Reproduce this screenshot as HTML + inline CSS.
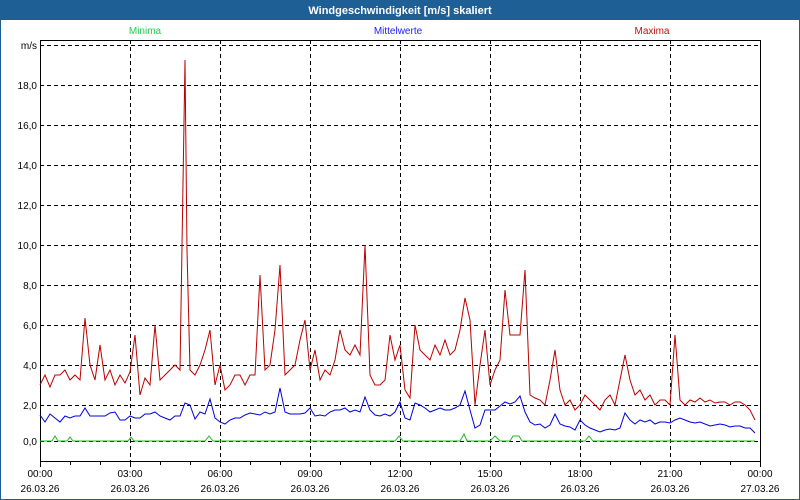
<!DOCTYPE html>
<html><head><meta charset="utf-8"><style>
html,body{margin:0;padding:0;background:#fff}
svg{display:block;font-family:"Liberation Sans",sans-serif}
</style></head><body>
<svg width="800" height="500" xmlns="http://www.w3.org/2000/svg">
<rect x="0" y="0" width="800" height="500" fill="#fff"/>
<rect x="0.5" y="0.5" width="799" height="499" fill="none" stroke="#1e5f96"/>
<rect x="0" y="0" width="800" height="20" fill="#1e5f96"/>
<text x="400" y="14" fill="#fff" font-size="11" font-weight="bold" text-anchor="middle">Windgeschwindigkeit [m/s] skaliert</text>
<g font-size="10" text-anchor="middle">
<text x="145" y="34" fill="#22cc55">Minima</text>
<text x="398" y="34" fill="#2020ff">Mittelwerte</text>
<text x="652" y="34" fill="#c01010">Maxima</text>
</g>
<g stroke="#000" stroke-width="1" stroke-dasharray="4,3" fill="none">
<path d="M40 45.5H760M40 85.5H760M40 125.5H760M40 165.5H760M40 205.5H760M40 245.5H760M40 285.5H760M40 325.5H760M40 365.5H760M40 405.5H760M40 441.5H760"/>
<path d="M130.5 40V461M220.5 40V461M310.5 40V461M400.5 40V461M490.5 40V461M580.5 40V461M670.5 40V461"/>
</g>
<path d="M40.5 40V461.5H760.5V40.5H40" fill="none" stroke="#000"/>
<g stroke="#000"><path d="M70.5 461v4M100.5 461v4M160.5 461v4M190.5 461v4M250.5 461v4M280.5 461v4M340.5 461v4M370.5 461v4M430.5 461v4M460.5 461v4M520.5 461v4M550.5 461v4M610.5 461v4M640.5 461v4M700.5 461v4M730.5 461v4M40.5 461v6M130.5 461v6M220.5 461v6M310.5 461v6M400.5 461v6M490.5 461v6M580.5 461v6M670.5 461v6M760.5 461v6"/></g>
<g font-size="10" fill="#000" text-anchor="end">
<text x="37" y="49">m/s</text>
<text x="37" y="89">18,0</text><text x="37" y="129">16,0</text><text x="37" y="169">14,0</text><text x="37" y="209">12,0</text><text x="37" y="249">10,0</text><text x="37" y="289">8,0</text><text x="37" y="329">6,0</text><text x="37" y="369">4,0</text><text x="37" y="409">2,0</text><text x="37" y="445">0,0</text>
</g>
<g font-size="10" fill="#000" text-anchor="middle">
<text x="40" y="477">00:00</text><text x="130" y="477">03:00</text><text x="220" y="477">06:00</text><text x="310" y="477">09:00</text><text x="400" y="477">12:00</text><text x="490" y="477">15:00</text><text x="580" y="477">18:00</text><text x="670" y="477">21:00</text><text x="760" y="477">00:00</text>
<text x="40" y="492">26.03.26</text><text x="130" y="492">26.03.26</text><text x="220" y="492">26.03.26</text><text x="310" y="492">26.03.26</text><text x="400" y="492">26.03.26</text><text x="490" y="492">26.03.26</text><text x="580" y="492">26.03.26</text><text x="670" y="492">26.03.26</text><text x="760" y="492">27.03.26</text>
</g>
<polyline fill="none" stroke="#22bb22" points="40,441 52,441 55,436 58,441 67,441 70,437 73,441 128,441 131,437 134,441 205,441 209,436 213,441 395,441 399,436 403,441 460,441 464,434 467,441 490,441 495,436 500,441 510,441 513,436 519,436 522,441 585,441 589,436 593,441 755,441"/>
<polyline fill="none" stroke="#0000dd" points="40,415 45,422 50,414 55,418 60,422 65,416 70,418 75,416 80,416 85,408 90,416 95,416 100,416 105,416 110,413 115,412 120,420 125,420 130,416 135,418 140,418 145,414 150,414 155,412 160,416 165,418 170,420 175,416 180,416 185,403 190,405 195,419 200,412 205,414 210,399 215,418 220,422 225,424 230,420 235,418 240,418 245,415 250,413 255,414 260,415 265,412 270,414 275,412 280,388 285,412 290,414 295,414 300,414 305,413 310,408 315,416 320,415 325,416 330,412 335,410 340,410 345,408 350,412 355,410 360,412 365,397 370,410 375,415 380,416 385,414 390,416 395,412 400,402 405,418 410,420 415,403 420,405 425,408 430,412 435,410 440,408 445,410 450,410 455,408 460,405 465,391 470,410 475,428 480,425 485,410 490,410 495,410 500,406 505,402 510,404 515,402 520,396 525,412 530,422 535,425 540,424 545,428 550,425 555,414 560,424 565,426 570,427 575,430 580,420 585,425 590,428 595,430 600,432 605,430 610,429 615,430 620,428 625,413 630,420 635,424 640,420 645,422 650,420 655,424 660,422 665,422 670,423 675,420 680,418 685,420 690,422 695,423 700,422 705,424 710,426 715,425 720,424 725,425 730,427 735,426 740,426 745,428 750,428 755,433"/>
<polyline fill="none" stroke="#bb0000" points="40,385 45,375 50,387 55,375 60,375 65,370 70,380 75,375 80,380 85,318 90,365 95,380 100,345 105,380 110,370 115,385 120,375 125,383 130,372 135,335 140,395 145,378 150,385 155,325 160,380 165,375 170,370 175,365 180,370 185,60 187,250 190,370 195,375 200,365 205,350 210,330 215,385 220,365 225,390 230,385 235,375 240,375 245,385 250,375 255,375 260,275 265,370 270,365 275,330 280,265 285,375 290,370 295,365 300,340 305,320 310,370 315,350 320,380 325,370 330,375 335,360 340,330 345,350 350,355 355,345 360,355 365,245 370,375 375,385 380,385 385,380 390,335 395,360 400,345 405,390 410,398 415,325 420,350 425,355 430,360 435,345 440,355 445,340 450,355 455,350 460,330 465,298 470,320 475,405 480,365 485,330 490,385 495,370 500,360 505,290 510,335 515,335 520,335 525,270 530,395 535,398 540,400 545,405 550,380 555,350 560,390 565,405 570,400 575,410 580,405 585,395 590,400 595,405 600,410 605,400 610,395 615,405 620,380 625,355 630,380 635,395 640,390 645,400 650,395 655,405 660,400 665,400 670,405 675,335 680,400 685,405 690,400 695,402 700,398 705,402 710,400 715,403 720,402 725,402 730,405 735,402 740,402 745,405 750,410 755,420"/>
</svg>
</body></html>
